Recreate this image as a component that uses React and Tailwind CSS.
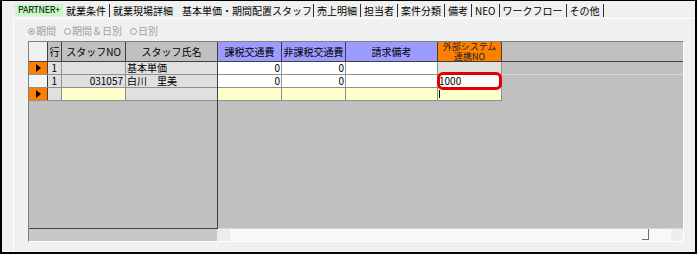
import React from 'react';

const tabs = ['売上明細', '担当者', '案件分類', '備考', 'NEO', 'ワークフロー', 'その他'];

const Sep = () => <span className="w-px h-[13px] bg-[#303030]" />;

const Tri = () => (
    <svg width="5" height="8" viewBox="0 0 5 8">
        <polygon points="0,0 5,4 0,8" fill="#000" />
    </svg>
);

const Radio = ({ checked, label }) => (
    <span className="flex items-center">
        <svg width="7" height="7" viewBox="0 0 7 7">
            <circle cx="3.5" cy="3.5" r="3" fill="none" stroke="#a0a0a0" strokeWidth="1" />
            {checked && <circle cx="3.5" cy="3.5" r="1.3" fill="#a0a0a0" />}
        </svg>
        <span className="ml-[1px]">{label}</span>
    </span>
);

const App = () => {
    return (
        <div className="w-[700px] h-[254px] bg-white text-[10px] leading-[12px] text-black" style={{ fontFamily: '"Noto Sans CJK JP", "Noto Sans", sans-serif' }}>
            <div className="w-[697px] h-[254px] bg-[#f0f0f0] border-black border-l-2 border-t border-b-2 border-r-2 flex flex-col relative">
                {/* タブ */}
                <div className="h-[17px] flex items-end pb-[1px]">
                    <span className="ml-[13px] w-[48px] h-[12px] mb-[1px] bg-[#c8f8c8] flex items-center justify-center text-[9px] tracking-[-0.3px]">PARTNER+</span>
                    <span className="px-[3px]">就業条件</span>
                    <Sep />
                    <span className="px-[3px]">就業現場詳細</span>
                    <span className="pl-[6px] pr-[1px]">基本単価・期間配置スタッフ</span>
                    {tabs.map((t) => (
                        <React.Fragment key={t}>
                            <Sep />
                            <span className="px-[3px]">{t}</span>
                        </React.Fragment>
                    ))}
                    <Sep />
                </div>

                {/* タブページ */}
                <div className="ml-[11px] flex-1 border-l border-t border-white flex flex-col">
                    <div className="mt-[7px] ml-[14px] h-[10px] flex items-center gap-[8px] text-[#a0a0a0]">
                        <Radio checked label="期間" />
                        <Radio label="期間＆日別" />
                        <Radio label="日別" />
                    </div>

                    {/* グリッド */}
                    <div className="mt-[5px] ml-[14px] w-[656px] h-[201px] border border-[#808080] border-b-white border-r-white flex flex-col">
                        <div className="h-[187px] flex">
                            {/* 固定列 */}
                            <div className="w-[189px] border-r border-b border-[#404040] bg-[#c0c0c0] flex flex-col">
                                <div className="h-[20px] flex border-b border-[#404040]">
                                    <div className="w-[19px] bg-[#f0f0f0] border-r border-[#404040]" />
                                    <div className="w-[14px] border-r border-[#404040] flex items-center justify-center">行</div>
                                    <div className="w-[64px] border-r border-[#404040] flex items-center justify-center">スタッフNO</div>
                                    <div className="w-[91px] flex items-center justify-center">スタッフ氏名</div>
                                </div>
                                <div className="h-[13px] flex border-b border-[#909090]">
                                    <div className="w-[19px] bg-[#ff8000] border-r border-[#404040] flex items-center justify-center"><Tri /></div>
                                    <div className="w-[14px] bg-[#e0e0e0] border-r border-[#909090] text-right pr-[4px]">1</div>
                                    <div className="w-[64px] bg-[#e0e0e0] border-r border-[#909090]" />
                                    <div className="w-[91px] bg-[#e0e0e0] pl-[1px]">基本単価</div>
                                </div>
                                <div className="h-[13px] flex border-b border-[#909090]">
                                    <div className="w-[19px] bg-[#f4f4f4] border-r border-[#404040]" />
                                    <div className="w-[14px] bg-[#e0e0e0] border-r border-[#909090] text-right pr-[4px]">1</div>
                                    <div className="w-[64px] bg-[#e0e0e0] border-r border-[#909090] text-right pr-[2px]">031057</div>
                                    <div className="w-[91px] bg-[#e0e0e0] pl-[1px]">白川　里美</div>
                                </div>
                                <div className="h-[13px] flex border-b border-[#909090]">
                                    <div className="w-[19px] bg-[#ff8000] border-r border-[#404040] flex items-center justify-center"><Tri /></div>
                                    <div className="w-[14px] bg-[#e0e0e0] border-r border-[#909090]" />
                                    <div className="w-[64px] bg-[#ffffcc] border-r border-[#909090]" />
                                    <div className="w-[91px] bg-[#e0e0e0]" />
                                </div>
                            </div>

                            {/* スクロール列 */}
                            <div className="flex-1 bg-[#c0c0c0] border-b border-[#d8d8d8] flex flex-col">
                                <div className="h-[20px] flex border-b border-[#404040]">
                                    <div className="w-[64px] bg-[#9c9cff] border-r border-[#404040] flex items-center justify-center">課税交通費</div>
                                    <div className="w-[64px] bg-[#9c9cff] border-r border-[#404040] flex items-center justify-center">非課税交通費</div>
                                    <div className="w-[92px] bg-[#9c9cff] border-r border-[#404040] flex items-center justify-center">請求備考</div>
                                    <div className="w-[64px] bg-[#ff8000] border-r border-[#404040] flex flex-col items-center justify-center text-[9px] leading-[9.5px] text-[#202020]">
                                        <span>外部システム</span>
                                        <span>連携NO</span>
                                    </div>
                                    <div className="flex-1" />
                                </div>
                                <div className="h-[13px] flex">
                                    <div className="w-[64px] bg-white border-r border-b border-[#909090] text-right pr-[1px]">0</div>
                                    <div className="w-[64px] bg-white border-r border-b border-[#909090] text-right pr-[1px]">0</div>
                                    <div className="w-[92px] bg-white border-r border-b border-[#909090]" />
                                    <div className="w-[64px] bg-[#e0e0e0] border-r border-b border-[#909090]" />
                                    <div className="flex-1 border-b border-[#d8d8d8]" />
                                </div>
                                <div className="h-[13px] flex">
                                    <div className="w-[64px] bg-white border-r border-b border-[#909090] text-right pr-[1px]">0</div>
                                    <div className="w-[64px] bg-white border-r border-b border-[#909090] text-right pr-[1px]">0</div>
                                    <div className="w-[92px] bg-white border-r border-b border-[#909090]" />
                                    <div className="w-[64px] bg-white border-r border-b border-[#909090] pl-[1px]">1000</div>
                                </div>
                                <div className="h-[13px] flex">
                                    <div className="w-[64px] bg-[#ffffcc] border-r border-b border-[#909090]" />
                                    <div className="w-[64px] bg-[#ffffcc] border-r border-b border-[#909090]" />
                                    <div className="w-[92px] bg-[#ffffcc] border-r border-b border-[#909090]" />
                                    <div className="w-[64px] bg-[#ffffcc] border-r border-b border-[#909090] pl-[1px] pt-[2px]">
                                        <div className="w-px h-[8px] bg-black" />
                                    </div>
                                </div>
                            </div>
                        </div>

                        {/* 横スクロールバー */}
                        <div className="h-[12px] flex">
                            <div className="w-[188px] bg-[#c8c8c8]" />
                            <div className="w-[13px] bg-[#ececec]" />
                            <div className="flex-1 bg-[#f8f8f8] flex justify-end">
                                <div className="w-[7px] h-[11px] border-r border-b border-[#707070] mr-[22px]" />
                                <div className="w-[12px] bg-[#eeeeee]" />
                            </div>
                        </div>
                    </div>
                </div>

                {/* 赤枠 */}
                <div className="absolute left-[435px] top-[71px] w-[65px] h-[18px] border-[3px] border-[#e00000] rounded-[6px]" />
            </div>
        </div>
    );
};

export default App;
